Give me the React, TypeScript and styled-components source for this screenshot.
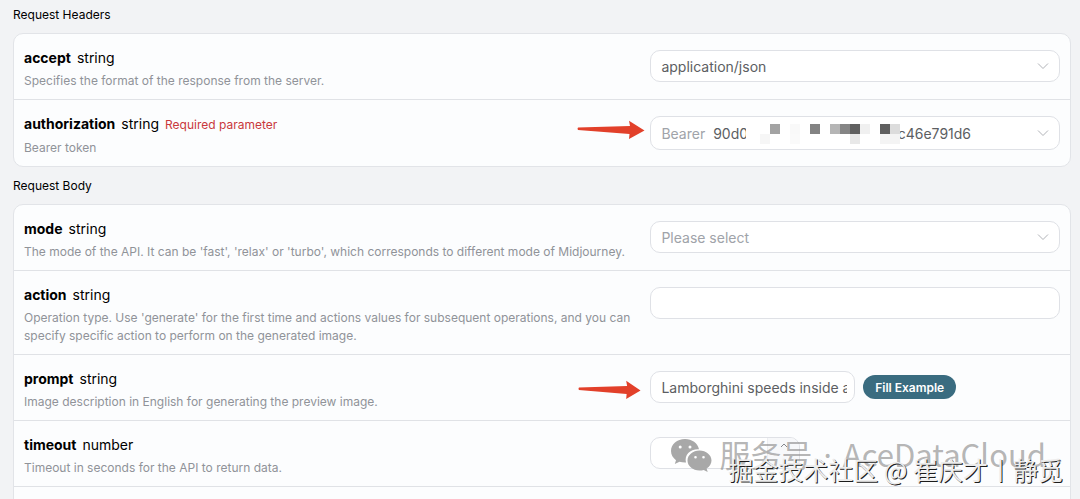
import React from 'react';
import type { ReactNode } from 'react';
import styled, { createGlobalStyle } from 'styled-components';

const Global = createGlobalStyle`
  * { box-sizing: border-box; }
  body {
    margin: 0;
    background: #f2f3f5;
    color: #000;
    font-family: Inter, "Noto Sans CJK SC", sans-serif;
    font-size: 14px;
  }
`;

const Page = styled.main`
  position: relative;
  height: 100vh;
  overflow: hidden;
  padding: 5px 9px 0 13px;
`;

const SectionTitle = styled.h2`
  margin: 0;
  padding-bottom: 8px;
  font-size: 12px;
  line-height: 20px;
  font-weight: 400;
`;

const Card = styled.section`
  margin-bottom: 9px;
  border: 1px solid #e2e4e8;
  border-radius: 10px;
  background: #fcfdfe;
`;

const Row = styled.div`
  display: grid;
  grid-template-columns: 3fr 2fr;
  column-gap: 12px;
  align-items: start;
  min-height: 66px;
  padding: 12px 10px 9px;
  border-bottom: 1px solid #e0e2e6;
  &:last-child { border-bottom: 0; min-height: 65px; }
`;

const Heading = styled.label`
  display: flex;
  align-items: baseline;
  gap: 6px;
  line-height: 24px;
`;

const Name = styled.span`
  font-weight: 700;
`;

const Required = styled.span`
  font-size: 12px;
  color: #c9383c;
`;

const Description = styled.p`
  margin: 2px 0 0;
  font-size: 12px;
  line-height: 18px;
  color: #909399;
`;

const Control = styled.div`
  position: relative;
  display: flex;
  align-items: center;
  gap: 8px;
  padding-top: 4px;
`;

const Box = styled.div<{ $width?: string; $tall?: boolean }>`
  position: relative;
  display: flex;
  align-items: center;
  gap: 8px;
  width: ${p => p.$width ?? '100%'};
  height: ${p => (p.$tall ? 34 : 32)}px;
  padding: 0 10px;
  border: 1px solid #dfe1e6;
  border-radius: 10px;
  background: #fff;
  overflow: hidden;
`;

const Select = styled.select<{ $empty?: boolean }>`
  flex: 1;
  min-width: 0;
  padding: 0;
  border: 0;
  outline: 0;
  appearance: none;
  background: transparent;
  font: inherit;
  color: ${p => (p.$empty ? '#a0a3a9' : '#5c5e62')};
`;

const Input = styled.input`
  flex: 1;
  min-width: 0;
  margin-right: -3px;
  padding: 0;
  border: 0;
  outline: 0;
  background: transparent;
  font: inherit;
  color: #5c5e62;
`;

const Prefix = styled.span`
  color: #a0a3a9;
`;

const FillButton = styled.button`
  height: 24px;
  padding: 0 12px;
  border: 0;
  border-radius: 12px;
  background: #3a6c80;
  color: #fff;
  font: inherit;
  font-size: 12px;
  font-weight: 600;
`;

const Stepper = styled.div`
  display: flex;
  flex-direction: column;
  align-items: center;
  width: 32px;
  height: 32px;
  margin-right: -10px;
  border-left: 1px solid #eceef1;
  background: #f7f8fa;
`;

const StepButton = styled.button`
  display: grid;
  place-items: center;
  width: 100%;
  flex: 1;
  padding: 0;
  border: 0;
  background: transparent;
`;

const Mosaic = styled.svg`
  position: absolute;
  left: 95px;
  top: 1px;
`;

const Pointer = styled.svg<{ $low?: boolean }>`
  position: absolute;
  right: calc(100% + ${p => (p.$low ? 9 : 5)}px);
  top: ${p => (p.$low ? 13 : 8)}px;
`;

const AccountMark = styled.div`
  position: absolute;
  right: 34px;
  bottom: 22px;
  display: flex;
  align-items: center;
  gap: 8px;
  font-family: "Noto Sans CJK SC", sans-serif;
  font-size: 31px;
  line-height: 44px;
  white-space: nowrap;
  color: rgba(140, 140, 140, 0.65);
  pointer-events: none;
`;

const Dot = styled.span`
  padding: 0 4px;
  font-family: "Noto Sans", sans-serif;
`;

const CommunityMark = styled.div`
  position: absolute;
  right: 17px;
  bottom: 12px;
  font-family: "Noto Sans CJK SC", sans-serif;
  font-size: 25px;
  line-height: 36px;
  white-space: nowrap;
  color: #ececec;
  text-shadow: 1px 1px 0 #1c1c1c;
  pointer-events: none;
`;

const Chevron = () => (
  <svg width="12" height="8" viewBox="0 0 12 8" fill="none" stroke="#b0b2b7" aria-hidden="true">
    <path d="M1 1.5 6 6.5 11 1.5" />
  </svg>
);

const Arrow = ({ low }: { low?: boolean }) => (
  <Pointer $low={low} width={low ? 63 : 68} height="20" viewBox="0 0 68 20" preserveAspectRatio="none" aria-hidden="true">
    <path d="M1 7.6 53 6 52 .8 67.500 10.500 52 19 52.500 14 1 10Q0 8.800 1 7.600Z" fill="#e2402a" />
  </Pointer>
);

const blocks: [number, number, string][] = [
  [24, 6, '#a3a3a3'], [44, 6, '#f9f9f9'], [64, 6, '#838383'], [84, 6, '#b5b5b5'],
  [94, 6, '#858585'], [104, 6, '#606060'], [114, 6, '#f0f0f0'], [134, 6, '#5f5f5f'],
  [144, 6, '#dcdcdc'], [14, 16, '#f6f6f6'], [44, 16, '#fafafa'], [104, 16, '#e8e8e8'],
  [134, 16, '#f4f4f4'], [144, 16, '#f4f4f4'],
];

const Redaction = () => (
  <Mosaic width="154" height="30" aria-hidden="true">
    <rect width="154" height="30" fill="#fff" />
    {blocks.map(([x, y, fill]) => (
      <rect key={`${x}-${y}`} x={x} y={y} width="10" height="10" fill={fill} />
    ))}
  </Mosaic>
);

const WeChat = () => (
  <svg width="42" height="34" viewBox="0 0 42 34" aria-hidden="true">
    <path
      fill="#a8a8a8"
      fillRule="evenodd"
      d="M15 1C7 1 1 6.300 1 13c0 3.800 2 7 5 9.200L4.800 26l4.700-2.300c2 .6 4 .9 6.500.8-2-8 4.500-13.800 13-13.300C27.700 5.200 22 1 15 1ZM10.200 7.500a1.500 1.500 0 1 1 0 3 1.500 1.500 0 0 1 0-3Zm9.800 0a1.500 1.500 0 1 1 0 3 1.500 1.500 0 0 1 0-3Z"
    />
    <path
      fill="#a8a8a8"
      fillRule="evenodd"
      d="M29.500 12.500c-6.600 0-12 4.500-12 10s5.400 10 12 10c1.500 0 2.900-.2 4.200-.6l4 2.100-1.100-3.500c3-1.900 4.900-4.700 4.900-8 0-5.500-5.400-10-12-10ZM25.500 18a1.300 1.300 0 1 1 0 2.600 1.300 1.300 0 0 1 0-2.600Zm8 0a1.300 1.300 0 1 1 0 2.600 1.300 1.300 0 0 1 0-2.600Z"
    />
  </svg>
);

type ParamProps = {
  name: string;
  type: string;
  description: string;
  required?: boolean;
  children: ReactNode;
};

const Param = ({ name, type, description, required, children }: ParamProps) => (
  <Row>
    <div>
      <Heading htmlFor={name}>
        <Name>{name}</Name>
        <span>{type}</span>
        {required && <Required>Required parameter</Required>}
      </Heading>
      <Description>{description}</Description>
    </div>
    <Control>{children}</Control>
  </Row>
);

const token = `90d0${'\u00a0'.repeat(38)}c46e791d6`;

export default function App() {
  return (
    <Page>
      <Global />
      <SectionTitle>Request Headers</SectionTitle>
      <Card>
        <Param name="accept" type="string" description="Specifies the format of the response from the server.">
          <Box>
            <Select id="accept"><option>application/json</option></Select>
            <Chevron />
          </Box>
        </Param>
        <Param name="authorization" type="string" description="Bearer token" required>
          <Arrow />
          <Box $tall>
            <Prefix>Bearer</Prefix>
            <Select id="authorization"><option>{token}</option></Select>
            <Chevron />
            <Redaction />
          </Box>
        </Param>
      </Card>
      <SectionTitle>Request Body</SectionTitle>
      <Card>
        <Param
          name="mode"
          type="string"
          description="The mode of the API. It can be 'fast', 'relax' or 'turbo', which corresponds to different mode of Midjourney."
        >
          <Box>
            <Select id="mode" $empty><option>Please select</option></Select>
            <Chevron />
          </Box>
        </Param>
        <Param
          name="action"
          type="string"
          description="Operation type. Use 'generate' for the first time and actions values for subsequent operations, and you can specify specific action to perform on the generated image."
        >
          <Box><Input id="action" /></Box>
        </Param>
        <Param name="prompt" type="string" description="Image description in English for generating the preview image.">
          <Arrow low />
          <Box $width="50%">
            <Input id="prompt" defaultValue="Lamborghini speeds inside a volcano" />
          </Box>
          <FillButton type="button">Fill Example</FillButton>
        </Param>
        <Param name="timeout" type="number" description="Timeout in seconds for the API to return data.">
          <Box $width="150px">
            <Input id="timeout" inputMode="numeric" />
            <Stepper>
              <StepButton type="button" aria-label="Increase">
                <svg width="8" height="5" viewBox="0 0 8 5" fill="none" stroke="#85878c" aria-hidden="true">
                  <path d="M1 4 4 1 7 4" />
                </svg>
              </StepButton>
              <StepButton type="button" aria-label="Decrease" />
            </Stepper>
          </Box>
        </Param>
        <Row />
      </Card>
      <AccountMark>
        <WeChat />
        <span>服务号 <Dot>·</Dot> AceDataCloud</span>
      </AccountMark>
      <CommunityMark>掘金技术社区 @ 崔庆才丨静觅</CommunityMark>
    </Page>
  );
}
